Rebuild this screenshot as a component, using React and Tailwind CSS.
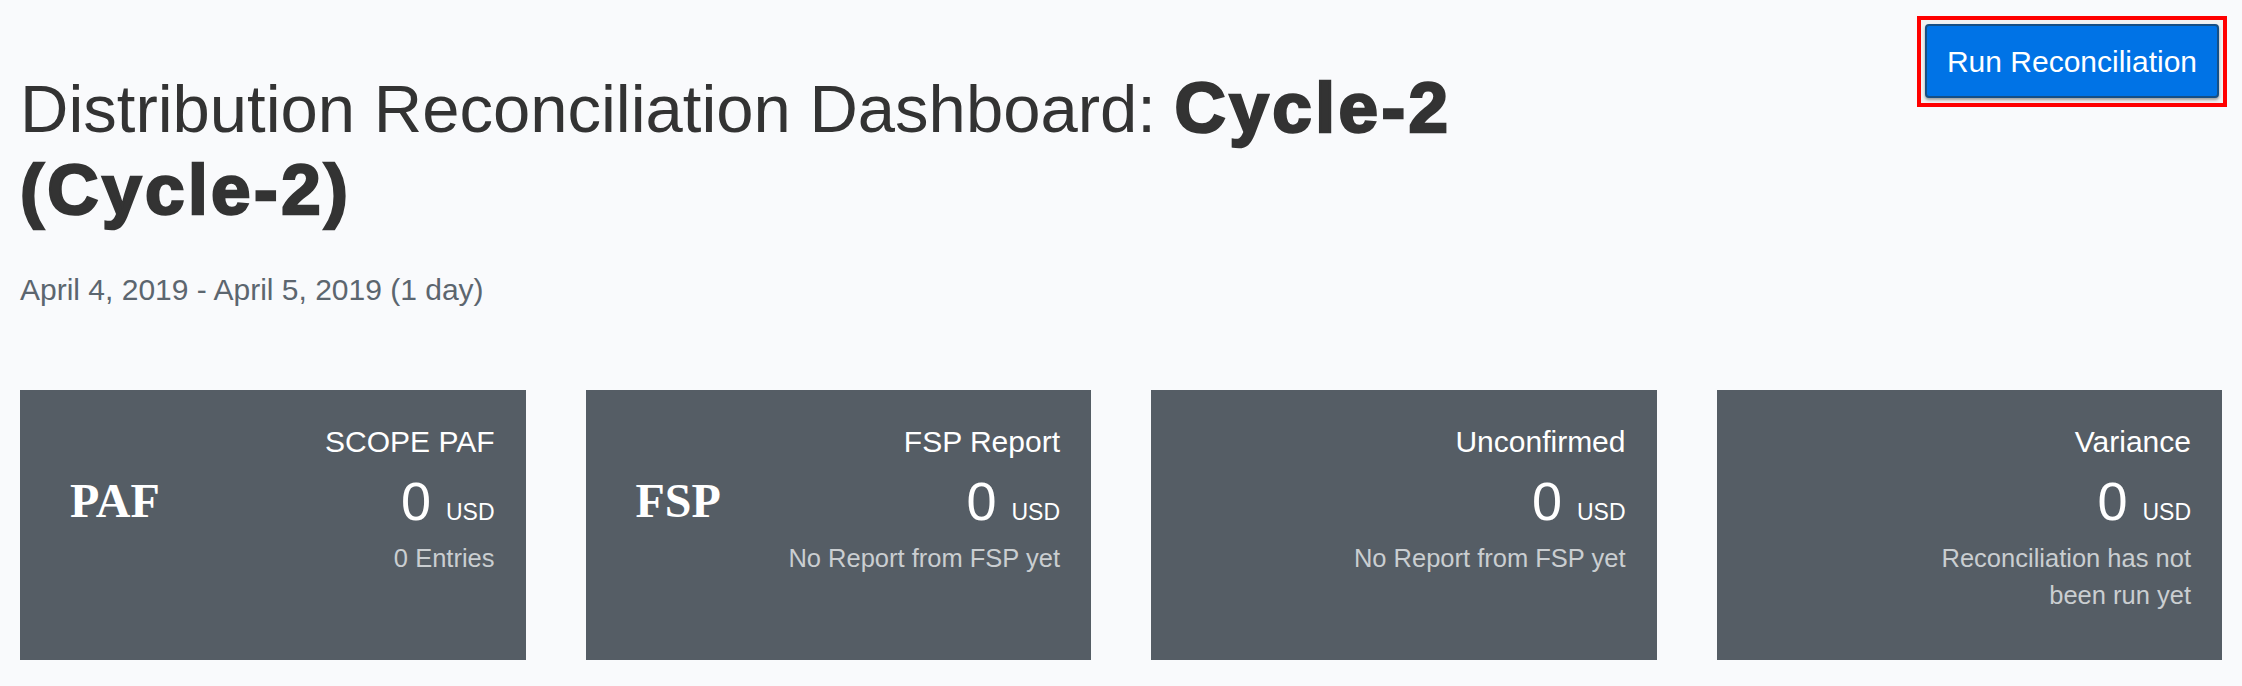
import React from "react";

const cards = [
  { label: "PAF", title: "SCOPE PAF", value: "0", sub: ["0 Entries"] },
  { label: "FSP", title: "FSP Report", value: "0", sub: ["No Report from FSP yet"] },
  { label: null, title: "Unconfirmed", value: "0", sub: ["No Report from FSP yet"] },
  { label: null, title: "Variance", value: "0", sub: ["Reconciliation has not", "been run yet"] },
];

function Card({ label, title, value, sub }) {
  return (
    <div className="h-[270px] bg-[#555d65] pt-[35px] pl-[50px] pr-[31px]">
      <div className="flex items-center justify-between">
        <div className="font-['Liberation_Serif',serif] text-[48px] font-bold leading-none text-white">
          {label}
        </div>
        <div className="text-right">
          <div className="text-[30px] leading-[34px] text-white">{title}</div>
          <div className="mt-[12px] text-[54px] leading-[60px] text-white">
            {value} <span className="text-[23px] leading-none">USD</span>
          </div>
          <div className="mt-[9px] text-[25.5px] leading-[37px] text-[#caced1]">
            {sub.map((s, i) => (
              <div key={i}>{s}</div>
            ))}
          </div>
        </div>
      </div>
    </div>
  );
}

export default function App() {
  return (
    <div className="min-h-[686px] bg-[#f9fafc] px-[20px] font-['Liberation_Sans',Arial,sans-serif]">
      <div className="flex items-start justify-between">
        <h1 className="mt-[68px] w-[1650px] text-[67px] leading-[82px] text-[#333333]">
          Distribution Reconciliation Dashboard:{" "}
          <span className="text-[71px] leading-[70px] font-bold tracking-[3.5px] [-webkit-text-stroke:2.5px_#333333]">Cycle-2</span>{" "}
          <span className="text-[71px] leading-[70px] font-bold tracking-[3.5px] [-webkit-text-stroke:2.5px_#333333]">(Cycle-2)</span>
        </h1>
        <div className="mt-[16px] mr-[-5px] border-[4px] border-[#ff0000] bg-[#f1f2f3] px-[4px] pt-[4px] pb-[5px]">
          <button className="flex h-[74px] w-[294px] items-center justify-center rounded-[4px] border-[2px] border-[#164f85] bg-[#0073e6] text-[30px] text-white shadow-[0_2px_3px_rgba(0,0,0,0.35)]">
            Run Reconciliation
          </button>
        </div>
      </div>
      <div className="mt-[40px] text-[30px] leading-[36px] text-[#5c666f]">
        April 4, 2019 - April 5, 2019 (1 day)
      </div>
      <div className="mt-[82px] grid grid-cols-4 gap-[60px]">
        {cards.map((c, i) => (
          <Card key={i} {...c} />
        ))}
      </div>
    </div>
  );
}
